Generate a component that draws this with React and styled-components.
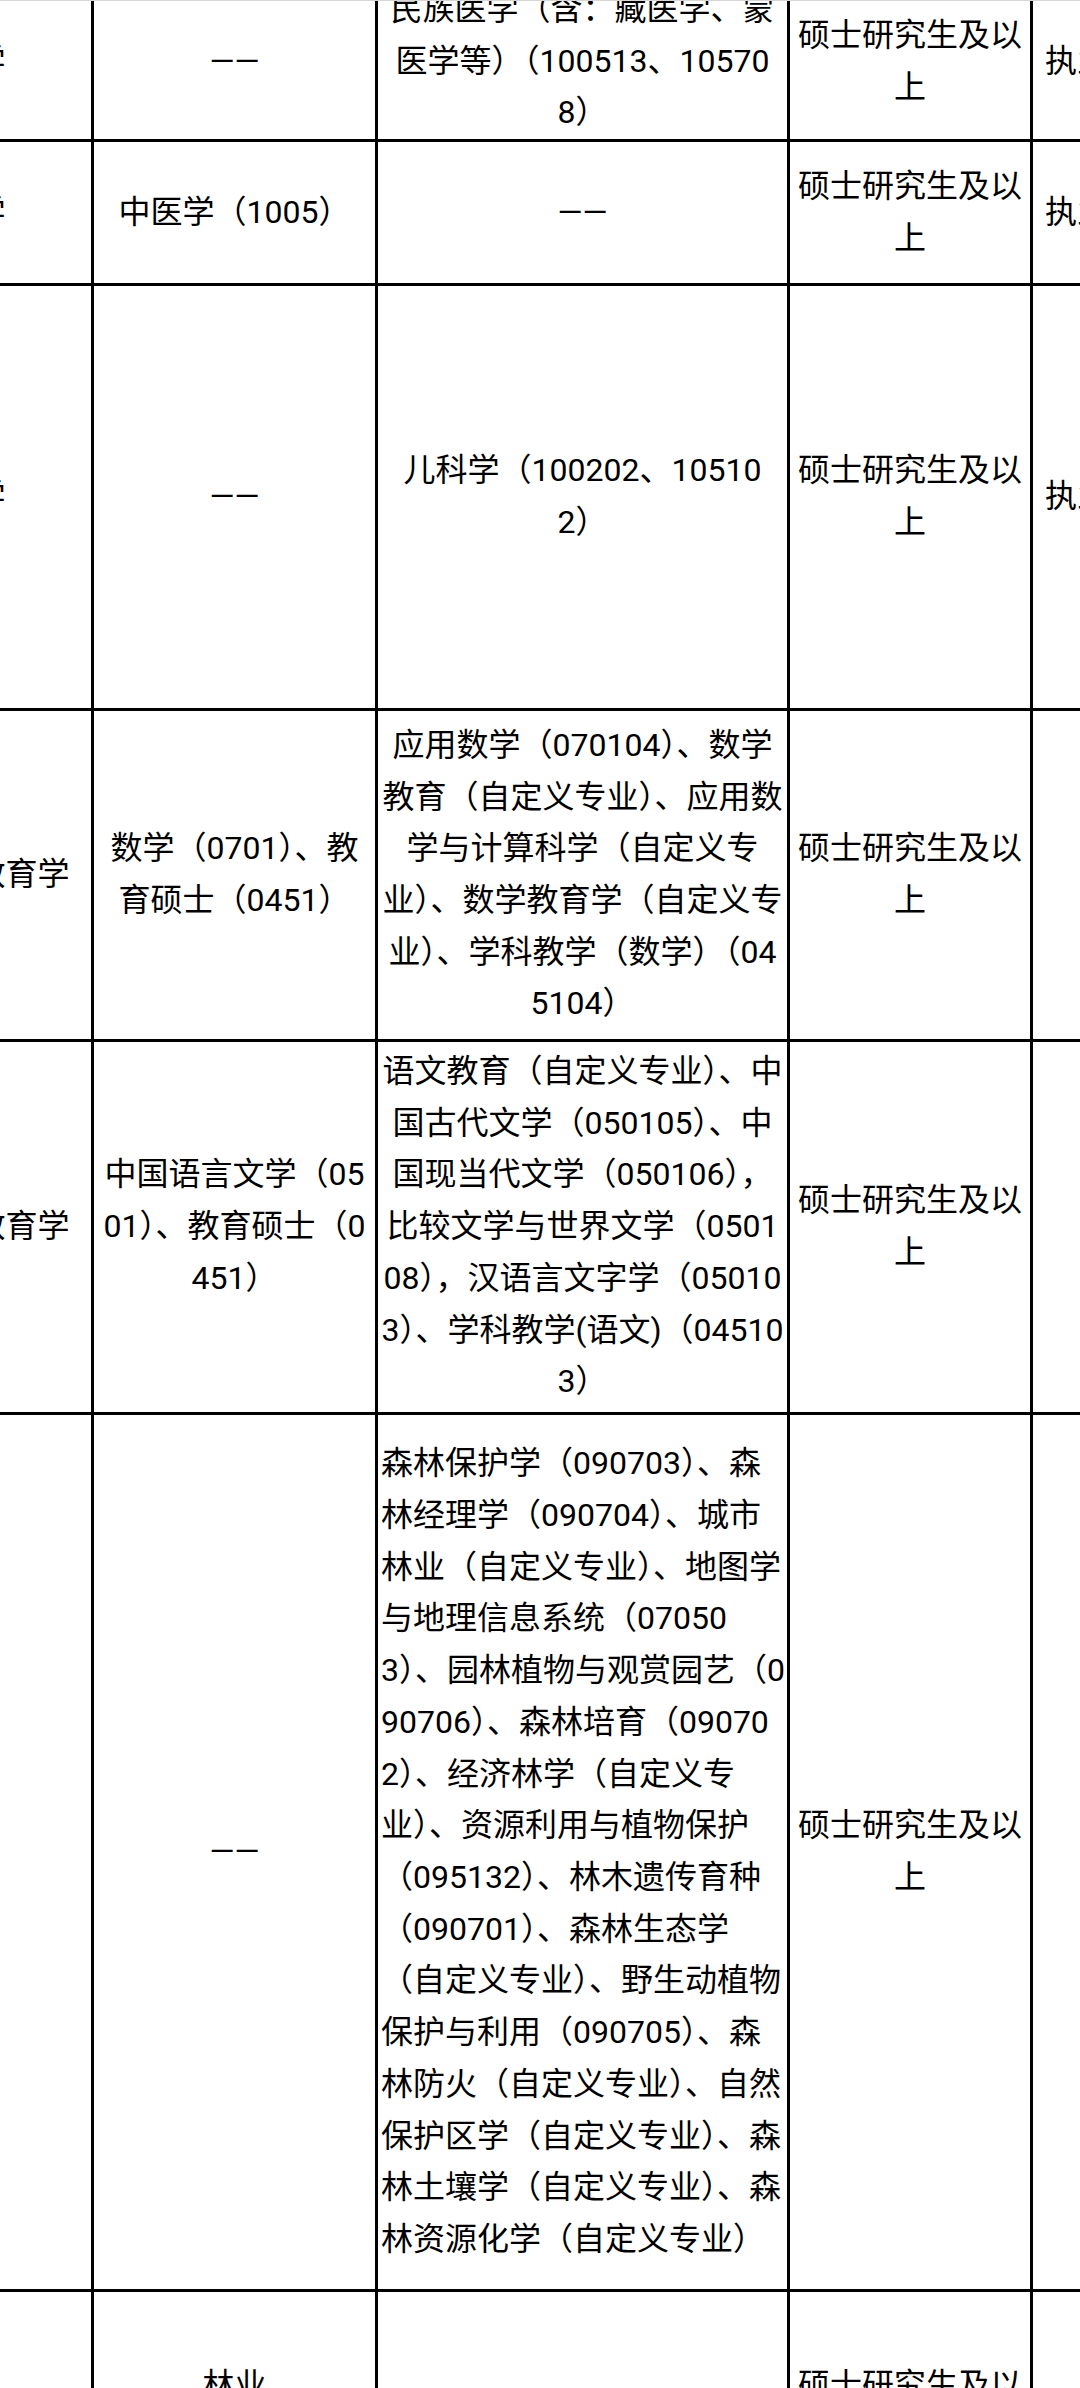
import React from "react";
import styled, { createGlobalStyle } from "styled-components";

const Global = createGlobalStyle`
  html, body { margin: 0; padding: 0; background: #ffffff; }
  body { font-family: Roboto, "Noto Sans CJK SC", sans-serif; }
`;

const Viewport = styled.div`
  position: relative;
  width: 1080px;
  height: 2388px;
  overflow: hidden;
  background: #ffffff;

  &::after {
    content: "";
    position: absolute;
    left: 0;
    right: 0;
    top: 0;
    height: 1px;
    background: #d6d6d6;
  }
`;

const Sheet = styled.div`
  display: grid;
  grid-template-columns: 267px 281px 409px 240px 300px;
  grid-template-rows: 155px 141px 422px 328px 370px 874px 240px;
  gap: 3px;
  padding: 3px;
  width: max-content;
  background: #000000;
  margin-left: -179px;
  margin-top: -19px;
`;

const Cell = styled.div`
  display: flex;
  align-items: center;
  background: #ffffff;
  padding: 0 ${(p) => p.$pad ?? 6}px;
  color: #000000;
  font-family: Roboto, "Noto Sans CJK SC", sans-serif;
  font-size: 32px;
  line-height: 51.7px;
  min-width: 0;
  overflow: hidden;
`;

const CellText = styled.div`
  width: 100%;
  text-align: ${(p) => p.$align ?? "center"};
  white-space: nowrap;
`;

const lines = (arr) =>
  arr.map((t, i) => (
    <React.Fragment key={i}>
      {i > 0 && <br />}
      {t}
    </React.Fragment>
  ));

const DEGREE = ["硕士研究生及以", "上"];
const LICENSE = ["执业医师资格证书"];

const rows = [
  [
    ["蒙医学"],
    ["——"],
    ["民族医学（含：藏医学、蒙", "医学等）（100513、10570", "8）"],
    DEGREE,
    LICENSE,
  ],
  [["中医学"], ["中医学（1005）"], ["——"], DEGREE, LICENSE],
  [["儿科学"], ["——"], ["儿科学（100202、10510", "2）"], DEGREE, LICENSE],
  [
    ["初中数学教育学"],
    ["数学（0701）、教", "育硕士（0451）"],
    [
      "应用数学（070104）、数学",
      "教育（自定义专业）、应用数",
      "学与计算科学（自定义专",
      "业）、数学教育学（自定义专",
      "业）、学科教学（数学）（04",
      "5104）",
    ],
    DEGREE,
    [],
  ],
  [
    ["初中语文教育学"],
    ["中国语言文学（05", "01）、教育硕士（0", "451）"],
    [
      "语文教育（自定义专业）、中",
      "国古代文学（050105）、中",
      "国现当代文学（050106），",
      "比较文学与世界文学（0501",
      "08），汉语言文字学（05010",
      "3）、学科教学(语文)（04510",
      "3）",
    ],
    DEGREE,
    [],
  ],
  [
    ["林学"],
    ["——"],
    [
      "森林保护学（090703）、森",
      "林经理学（090704）、城市",
      "林业（自定义专业）、地图学",
      "与地理信息系统（07050",
      "3）、园林植物与观赏园艺（0",
      "90706）、森林培育（09070",
      "2）、经济林学（自定义专",
      "业）、资源利用与植物保护",
      "（095132）、林木遗传育种",
      "（090701）、森林生态学",
      "（自定义专业）、野生动植物",
      "保护与利用（090705）、森",
      "林防火（自定义专业）、自然",
      "保护区学（自定义专业）、森",
      "林土壤学（自定义专业）、森",
      "林资源化学（自定义专业）",
    ],
    DEGREE,
    [],
  ],
  [["林业"], ["林业", "（0954）"], [], DEGREE, []],
];

export default function App() {
  return (
    <Viewport>
      <Global />
      <Sheet>
        {rows.map((row, r) =>
          row.map((content, c) => {
            const left = (r === 5 && c === 2) || c === 4;
            const pad = c === 4 ? 12 : c === 2 ? 3 : 6;
            return (
              <Cell key={`${r}-${c}`} $pad={pad}>
                <CellText $align={left ? "left" : "center"}>{lines(content)}</CellText>
              </Cell>
            );
          })
        )}
      </Sheet>
    </Viewport>
  );
}
